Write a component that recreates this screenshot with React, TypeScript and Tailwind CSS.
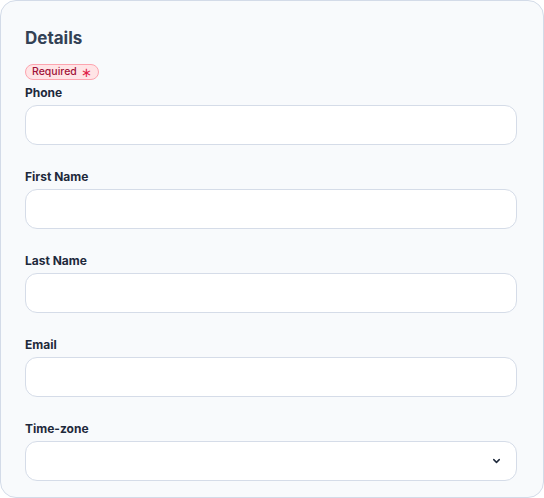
import React from "react";

function Field({ label, select }: { label: string; select?: boolean }) {
  return (
    <div className="flex flex-col gap-[2px]">
      <label className="text-[12px] font-bold leading-5 text-[#1e293b]">{label}</label>
      <div className="relative h-10 w-full rounded-xl border border-[#d5dce8] bg-white">
        {select && (
          <svg className="absolute right-[14px] top-1/2 -translate-y-1/2" width="11" height="11" viewBox="0 0 24 24" fill="none" stroke="#1e293b" strokeWidth="3.2" strokeLinecap="round" strokeLinejoin="round">
            <path d="M6 9l6 6 6-6" />
          </svg>
        )}
      </div>
    </div>
  );
}

export default function App() {
  return (
    <div className="w-[544px] h-[498px] font-['Inter',sans-serif]">
      <div className="w-[544px] h-[498px] rounded-2xl border border-[#d3dbe8] bg-[#f8fafc] pl-[24px] pr-[26px] pt-[25px]">
        <h2 className="text-[17px] font-bold leading-6 text-[#334155]">Details</h2>
        <div className="mt-[14px] flex">
          <span className="inline-flex h-4 items-center gap-[4px] rounded-full border border-[#fda4af] bg-[#ffe4e6] px-[6px] text-[10.5px] font-medium leading-4 text-[#9f1239]">
            Required <span className="text-[#e11d48] text-[13px] leading-4">∗</span>
          </span>
        </div>
        <div className="mt-[3px] flex flex-col gap-[22px]">
          <Field label="Phone" />
          <Field label="First Name" />
          <Field label="Last Name" />
          <Field label="Email" />
          <Field label="Time-zone" select />
        </div>
      </div>
    </div>
  );
}
